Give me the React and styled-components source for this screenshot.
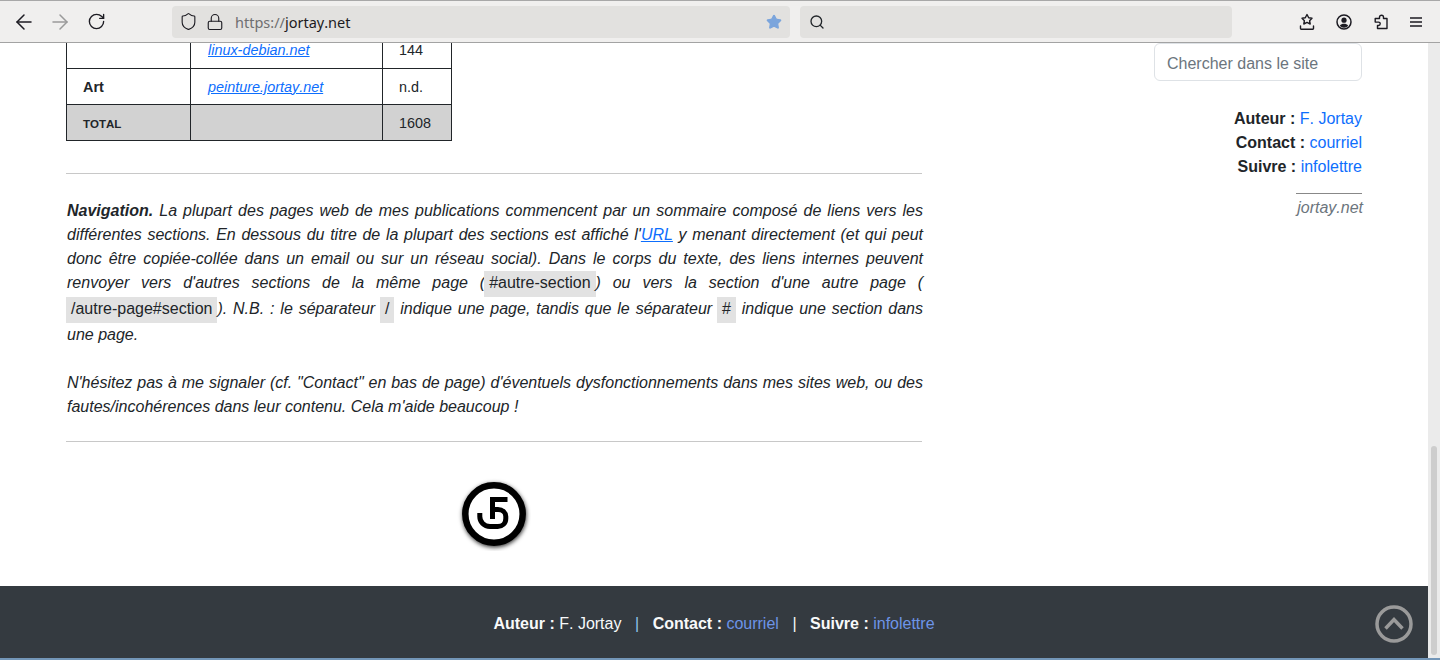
import styled, { createGlobalStyle } from 'styled-components';
import { ArrowLeft, ArrowRight, RotateCw, Lock, Shield, Search, Star } from 'lucide-react';

const GlobalStyle = createGlobalStyle`
  html, body {
    margin: 0;
    height: 100%;
    overflow: hidden;
    background: #fff;
  }
  * {
    box-sizing: border-box;
  }
`;

const Window = styled.div`
  width: 1440px;
  height: 660px;
  display: flex;
  flex-direction: column;
  font-family: 'Liberation Sans', Arial, sans-serif;
  font-size: 16px;
  line-height: 24px;
  font-kerning: none;
  color: #212529;
`;

const Toolbar = styled.div`
  flex: 0 0 43px;
  height: 43px;
  display: flex;
  align-items: center;
  background: #f0efee;
  border-top: 1px solid #a8a8a8;
  border-bottom: 1px solid #a3a3a3;
`;

const NavButtons = styled.div`
  width: 172px;
  padding-left: 6px;
  display: flex;
  align-items: center;
`;

const NavIcon = styled.span`
  width: 36px;
  display: flex;
  justify-content: center;
  color: ${(p) => (p.$off ? '#9a9a9a' : '#1c1b22')};
`;

const UrlBar = styled.div`
  width: 618px;
  height: 32px;
  margin-right: 10px;
  padding: 0 8px 0 7px;
  display: flex;
  align-items: center;
  background: #e2e1df;
  border-radius: 4px;
  color: #1c1b22;
  font-family: 'Noto Sans', sans-serif;
  font-size: 14.5px;
`;

const UrlIcon = styled.span`
  display: flex;
  margin-right: ${(p) => p.$gap}px;
`;

const UrlText = styled.span`
  flex: 1;
  span {
    color: #6f6f70;
  }
`;

const SearchBar = styled.div`
  width: 432px;
  height: 32px;
  padding-left: 9px;
  display: flex;
  align-items: center;
  background: #e2e1df;
  border-radius: 4px;
`;

const ToolIcons = styled.div`
  flex: 1;
  padding-left: 56px;
  display: flex;
  align-items: center;
  color: #1c1b22;
`;

const ToolIcon = styled.span`
  width: 37px;
  display: flex;
  justify-content: center;
  &:last-child {
    margin-left: -2px;
  }
`;

const Body = styled.div`
  flex: 1;
  min-height: 0;
  display: flex;
`;

const Viewport = styled.div`
  width: 1428px;
  overflow: hidden;
  display: flex;
  flex-direction: column;
`;

const Columns = styled.div`
  flex: 1;
  display: flex;
  padding: 0 66px;
`;

const Main = styled.main`
  width: 856px;
`;

const Table = styled.table`
  width: 385px;
  margin-top: -11px;
  border-collapse: collapse;
  table-layout: fixed;
`;

const Cell = styled.td`
  height: 36px;
  padding: 0 16px ${(p) => (p.$clipped ? 2 : 0)}px ${(p) => (p.$link ? 17 : 16)}px;
  border: 1px solid #212529;
  background: ${(p) => (p.$total ? '#d2d2d2' : '#fff')};
  font-style: ${(p) => (p.$link ? 'italic' : 'normal')};
  font-size: 14.4px;
  font-weight: ${(p) => (p.$head ? 700 : 400)};
`;

const SmallCaps = styled.span`
  font-size: 11.52px;
  vertical-align: -1px;
`;

const TableLink = styled.a`
  color: #0d6efd;
  text-decoration: underline;
`;

const Rule = styled.hr`
  margin: ${(p) => p.$top}px 0 ${(p) => p.$bottom}px;
  border: 0;
  border-top: 1px solid #c8c8c8;
`;

const Paragraph = styled.p`
  margin: 0 -1px 0 1px;
  font-style: italic;
  text-align: justify;
  & + & {
    margin-top: 24px;
  }
`;

const Code = styled.code`
  display: inline-block;
  margin-left: -1px;
  padding: 0 5px 2px;
  background: #e2e2e2;
  font-family: 'Liberation Sans', Arial, sans-serif;
  font-style: normal;
`;

const Logo = styled.div`
  display: flex;
  justify-content: center;
  margin: 35px 0 35px;
`;

const Side = styled.aside`
  flex: 1;
  display: flex;
  flex-direction: column;
  align-items: flex-end;
  text-align: right;
`;

const SearchInput = styled.input`
  width: 208px;
  height: 38px;
  padding: 3px 12px 0;
  border: 1px solid #dee2e6;
  border-radius: 6px;
  font: 16px 'Liberation Sans', Arial, sans-serif;
  font-kerning: none;
  &::placeholder {
    color: #6c757d;
    opacity: 1;
  }
`;

const Credits = styled.div`
  margin-top: 26px;
  a {
    color: #0d6efd;
  }
`;

const SideRule = styled.hr`
  width: 66px;
  margin: 14px 0 0;
  border: 0;
  border-top: 1px solid #888;
`;

const SiteName = styled.div`
  margin: 2px -1px 0 0;
  color: #6c757d;
  font-style: italic;
`;

const Footer = styled.footer`
  position: relative;
  flex: 0 0 72px;
  padding-top: 26px;
  display: flex;
  justify-content: center;
  background: #343a40;
  color: #f8f9fa;
  a {
    color: #6d94e8;
  }
`;

const FooterItem = styled.span`
  white-space: pre;
`;

const Sep = styled.span`
  margin: 0 13.5px;
  color: ${(p) => (p.$blue ? '#8fc4f2' : '#f8f9fa')};
`;

const BackToTop = styled.a`
  position: absolute;
  top: 19px;
  right: 15px;
  display: flex;
`;

const BottomLine = styled.div`
  flex: 0 0 2px;
  background: #7396b8;
`;

const Scrollbar = styled.div`
  flex: 0 0 12px;
  padding: 403px 3px 3px;
  background: #ebebeb;
`;

const Thumb = styled.div`
  height: 100%;
  border-radius: 3px;
  background: #cdcdcd;
`;

function PocketIcon() {
  return (
    <svg width="16" height="18" viewBox="0 0 16 18" fill="none" stroke="currentColor" strokeWidth="1.4">
      <path d="M8 1.500l1.700 3.300 3.300.5-2.400 2.400.6 3.300-3.200-1.600-3.200 1.600.6-3.300L3 5.300l3.300-.5z" strokeLinejoin="round" />
      <path d="M1.500 13v2.500c0 .4.300.7.700.7h11.600c.4 0 .7-.3.700-.7V13" strokeLinecap="round" />
    </svg>
  );
}

function AccountIcon() {
  return (
    <svg width="16" height="16" viewBox="0 0 16 16" fill="none">
      <circle cx="8" cy="8" r="7" stroke="currentColor" strokeWidth="1.5" />
      <circle cx="8" cy="6.200" r="2.600" fill="currentColor" />
      <path d="M3.800 11.800c1-1.500 2.500-2 4.200-2s3.200.5 4.200 2c-1 1.200-2.500 1.900-4.200 1.900s-3.200-.7-4.200-1.900z" fill="currentColor" />
    </svg>
  );
}

function PuzzleIcon() {
  return (
    <svg width="16" height="16" viewBox="0 0 16 16" fill="none" stroke="currentColor" strokeWidth="1.4" strokeLinejoin="round">
      <path d="M6.500 4.500V3.200a2 2 0 1 1 4 0v1.300h3.500v10H4.500v-3h1a1.700 1.700 0 0 0 0-3.400H2.200V4.500z" />
    </svg>
  );
}

function MenuIcon() {
  return (
    <svg width="12" height="10" viewBox="0 0 12 10" stroke="currentColor" strokeWidth="1.3">
      <path d="M0 1h12M0 5h12M0 9h12" />
    </svg>
  );
}

function JLogo() {
  return (
    <svg width="74" height="74" viewBox="0 0 74 74">
      <defs>
        <filter id="logo-shadow" x="-20%" y="-20%" width="140%" height="140%">
          <feDropShadow dx="0.500" dy="1.500" stdDeviation="2" floodColor="#000" floodOpacity="0.8" />
        </filter>
      </defs>
      <g fill="none" stroke="#000">
        <circle cx="37" cy="37" r="28.700" fill="#fff" strokeWidth="6.500" filter="url(#logo-shadow)" />
        <g strokeWidth="5">
          <path d="M50.500 22.500H35.500V42" />
          <path d="M35.500 32.500H41c4.500 0 7.800 3 7.800 7v2c0 4.800-3.500 8-8 8H33c-6 0-10.200-4.500-10.200-10V36" />
        </g>
      </g>
    </svg>
  );
}

function TopIcon() {
  return (
    <svg width="38" height="38" viewBox="0 0 38 38" fill="none" stroke="#9a9a9a" strokeWidth="3.500">
      <circle cx="19" cy="19" r="17" />
      <path d="M10.500 23.500L19 14.500l8.500 9" />
    </svg>
  );
}

export default function App() {
  return (
    <Window>
      <GlobalStyle />
      <Toolbar>
        <NavButtons>
          <NavIcon><ArrowLeft size={24} strokeWidth={1.5} /></NavIcon>
          <NavIcon $off><ArrowRight size={24} strokeWidth={1.5} /></NavIcon>
          <NavIcon><RotateCw size={19} strokeWidth={1.7} /></NavIcon>
        </NavButtons>
        <UrlBar>
          <UrlIcon $gap={8}><Shield size={19} strokeWidth={1.4} /></UrlIcon>
          <UrlIcon $gap={11}><Lock size={18} strokeWidth={1.5} /></UrlIcon>
          <UrlText><span>https://</span>jortay.net</UrlText>
          <Star size={16} fill="#7ba5dc" stroke="#7ba5dc" />
        </UrlBar>
        <SearchBar><Search size={16} /></SearchBar>
        <ToolIcons>
          <ToolIcon><PocketIcon /></ToolIcon>
          <ToolIcon><AccountIcon /></ToolIcon>
          <ToolIcon><PuzzleIcon /></ToolIcon>
          <ToolIcon><MenuIcon /></ToolIcon>
        </ToolIcons>
      </Toolbar>
      <Body>
        <Viewport>
          <Columns>
            <Main>
              <Table>
                <colgroup>
                  <col style={{ width: 124 }} />
                  <col style={{ width: 192 }} />
                  <col style={{ width: 69 }} />
                </colgroup>
                <tbody>
                  <tr>
                    <Cell $clipped />
                    <Cell $clipped $link><TableLink>linux-debian.net</TableLink></Cell>
                    <Cell $clipped>144</Cell>
                  </tr>
                  <tr>
                    <Cell $head>Art</Cell>
                    <Cell $link><TableLink>peinture.jortay.net</TableLink></Cell>
                    <Cell>n.d.</Cell>
                  </tr>
                  <tr>
                    <Cell $total $head><SmallCaps>TOTAL</SmallCaps></Cell>
                    <Cell $total />
                    <Cell $total>1608</Cell>
                  </tr>
                </tbody>
              </Table>
              <Rule $top={32} $bottom={25} />
              <Paragraph>
                <strong>Navigation.</strong> La plupart des pages web de mes publications commencent par un sommaire composé de liens vers les différentes sections. En dessous du titre de la plupart des sections est affiché l'<TableLink>URL</TableLink> y menant directement (et qui peut donc être copiée-collée dans un email ou sur un réseau social). Dans le corps du texte, des liens internes peuvent renvoyer vers d'autres sections de la même page (<Code>#autre-section</Code>) ou vers la section d'une autre page (<Code>/autre-page#section</Code>). N.B. : le séparateur <Code>/</Code> indique une page, tandis que le séparateur <Code>#</Code> indique une section dans une page.
              </Paragraph>
              <Paragraph>
                N'hésitez pas à me signaler (cf. "Contact" en bas de page) d'éventuels dysfonctionnements dans mes sites web, ou des fautes/incohérences dans leur contenu. Cela m'aide beaucoup !
              </Paragraph>
              <Rule $top={22} $bottom={0} />
              <Logo><JLogo /></Logo>
            </Main>
            <Side>
              <SearchInput placeholder="Chercher dans le site" />
              <Credits>
                <div><strong>Auteur :</strong> <a>F. Jortay</a></div>
                <div><strong>Contact :</strong> <a>courriel</a></div>
                <div><strong>Suivre :</strong> <a>infolettre</a></div>
              </Credits>
              <SideRule />
              <SiteName>jortay.net</SiteName>
            </Side>
          </Columns>
          <Footer>
            <FooterItem><strong>Auteur :</strong> F. Jortay</FooterItem>
            <Sep $blue>|</Sep>
            <FooterItem><strong>Contact :</strong> <a>courriel</a></FooterItem>
            <Sep>|</Sep>
            <FooterItem><strong>Suivre :</strong> <a>infolettre</a></FooterItem>
            <BackToTop><TopIcon /></BackToTop>
          </Footer>
        </Viewport>
        <Scrollbar><Thumb /></Scrollbar>
      </Body>
      <BottomLine />
    </Window>
  );
}
